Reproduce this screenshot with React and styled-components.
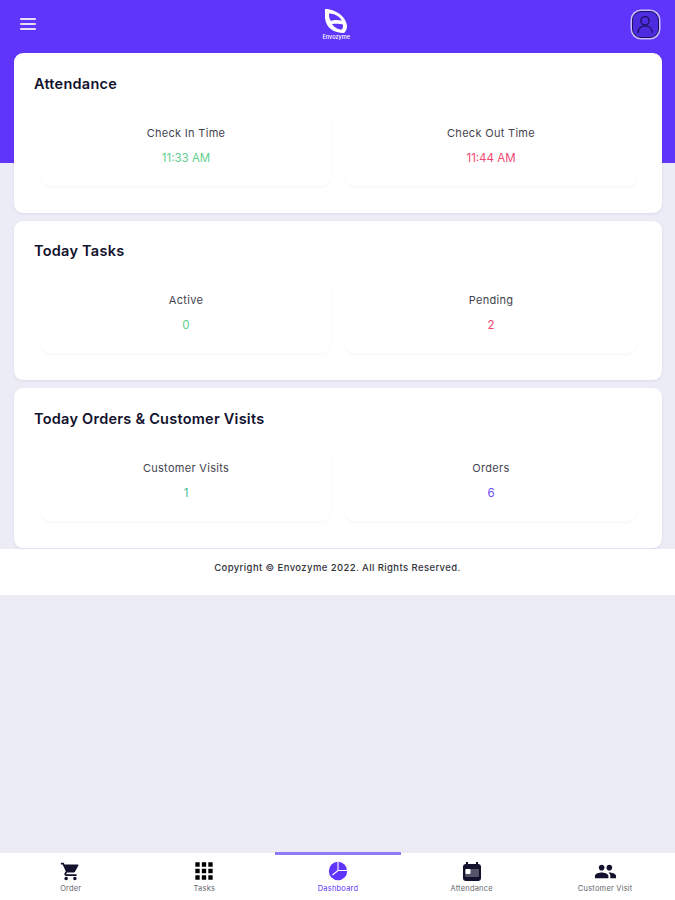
import React from "react";
import styled, { createGlobalStyle } from "styled-components";
import { MdShoppingCart, MdApps, MdPeople } from "react-icons/md";

const PURPLE = "#5f35fb";
const INK = "#12122e";

const cards = [
  {
    title: "Attendance",
    stats: [
      { label: "Check In Time", value: "11:33 AM", color: "#5fcf8c" },
      { label: "Check Out Time", value: "11:44 AM", color: "#f0476f" },
    ],
  },
  {
    title: "Today Tasks",
    stats: [
      { label: "Active", value: "0", color: "#5fcf8c" },
      { label: "Pending", value: "2", color: "#f0476f" },
    ],
  },
  {
    title: "Today Orders & Customer Visits",
    stats: [
      { label: "Customer Visits", value: "1", color: "#3fbf95" },
      { label: "Orders", value: "6", color: "#6a4cf5" },
    ],
  },
];

const Logo = () => (
  <svg width="24" height="25" viewBox="0 0 24 25">
    <path
      d="M1 0 C11 0 22 7 23 17 C23 20 22 22 20 24 C10 24 2 19 1 9 C1 6 1 3 1 0 Z"
      fill="#fff"
    />
    <path d="M5 4.5 C11 4.5 16 8 18 11.5 C15 11 10 10.5 7 12 C5 10 5 7 5 4.5 Z" fill={PURPLE} />
    <path d="M8 15 C12 14.5 16 14.5 19 15.5 C19 17 19 19 18 20.5 C14 20.5 10 18.5 8 15 Z" fill={PURPLE} />
  </svg>
);

const ProfileIcon = () => (
  <svg width="18" height="19" viewBox="0 0 19 20" fill="none" stroke="#1a1260" strokeWidth="1.4">
    <circle cx="9.5" cy="6" r="4.4" />
    <path d="M2 19 C2 14 5.5 11.5 9.5 11.5 C13.5 11.5 17 14 17 19" />
  </svg>
);

const PieIcon = () => (
  <svg width="20" height="20" viewBox="0 0 20 20">
    <circle cx="10" cy="10" r="9.2" fill={PURPLE} />
    <path d="M10 1 L10 9.5 L19 9.5 M10 9.5 L4.5 14" stroke="#fff" strokeWidth="1.1" fill="none" />
  </svg>
);

const CalendarIcon = () => (
  <svg width="20" height="19" viewBox="0 0 20 19">
    <rect x="1" y="2" width="18" height="17" rx="3" fill={INK} />
    <rect x="4" y="0" width="2" height="3" fill={INK} />
    <rect x="14" y="0" width="2" height="3" fill={INK} />
    <rect x="3" y="7" width="14" height="8" rx="1" fill="#55556a" />
    <rect x="3.5" y="7" width="5" height="5" rx="1" fill="#fff" />
  </svg>
);

const navItems = [
  { label: "Order", icon: <MdShoppingCart size={21} color={INK} /> },
  { label: "Tasks", icon: <MdApps size={26} color="#000" /> },
  { label: "Dashboard", icon: <PieIcon />, active: true },
  { label: "Attendance", icon: <CalendarIcon /> },
  { label: "Customer Visit", icon: <MdPeople size={23} color={INK} /> },
];

const App = () => (
  <>
    <GlobalStyle />
    <Page>
      <Header>
        <MenuButton>
          <span />
          <span />
          <span />
        </MenuButton>
        <Brand>
          <Logo />
          <BrandName>Envozyme</BrandName>
        </Brand>
        <Avatar>
          <ProfileIcon />
        </Avatar>
      </Header>

      <Cards>
        {cards.map((card) => (
          <Card key={card.title}>
            <CardTitle>{card.title}</CardTitle>
            <Stats>
              {card.stats.map((stat) => (
                <Stat key={stat.label}>
                  <StatLabel>{stat.label}</StatLabel>
                  <StatValue $color={stat.color}>{stat.value}</StatValue>
                </Stat>
              ))}
            </Stats>
          </Card>
        ))}
      </Cards>

      <Footer>Copyright © Envozyme 2022. All Rights Reserved.</Footer>

      <BottomNav>
        {navItems.map((item) => (
          <NavItem key={item.label}>
            <NavMark $active={item.active} />
            <NavIcon>{item.icon}</NavIcon>
            <NavLabel $active={item.active}>{item.label}</NavLabel>
          </NavItem>
        ))}
      </BottomNav>
    </Page>
  </>
);

const GlobalStyle = createGlobalStyle`
  * {
    box-sizing: border-box;
  }

  body {
    margin: 0;
    font-family: Inter, "Liberation Sans", sans-serif;
    background: #ebecf6;
  }
`;

const Page = styled.div`
  display: flex;
  flex-direction: column;
  height: 900px;
  overflow: hidden;
  background: linear-gradient(${PURPLE} 163px, #ebecf6 163px);
`;

const Header = styled.header`
  display: flex;
  align-items: center;
  justify-content: space-between;
  height: 53px;
  padding: 0 16.5px 5px 20px;
`;

const MenuButton = styled.div`
  display: flex;
  flex-direction: column;
  gap: 3px;
  width: 16px;

  span {
    height: 2px;
    border-radius: 1px;
    background: #e4ddff;
  }
`;

const Brand = styled.div`
  display: flex;
  flex-direction: column;
  align-items: center;
  margin-left: 5px;
  color: #fff;
`;

const BrandName = styled.span`
  font-size: 5.6px;
  font-weight: 500;
  line-height: 6px;
`;

const Avatar = styled.div`
  display: flex;
  align-items: center;
  justify-content: center;
  width: 27px;
  height: 27px;
  border: 1.5px solid #1a1260;
  border-radius: 9px;
  background: #4d2ce0;
  box-shadow: 0 0 0 1.5px #c9bcff;
`;

const Cards = styled.main`
  display: flex;
  flex-direction: column;
  gap: 8px;
  padding: 0 13px 0 14px;
`;

const Card = styled.section`
  height: 159.5px;
  padding: 21.5px 20px 0;
  border-radius: 9px;
  background: #fff;
  box-shadow: 0 1px 3px rgba(40, 40, 90, 0.08);
`;

const CardTitle = styled.h2`
  margin: 0;
  font-size: 14.5px;
  font-weight: 600;
  line-height: 18px;
  letter-spacing: 0.25px;
  color: ${INK};
`;

const Stats = styled.div`
  display: grid;
  grid-template-columns: 290px 292px;
  gap: 14px;
  margin: 12px 0 0 7px;
`;

const Stat = styled.div`
  display: flex;
  flex-direction: column;
  align-items: center;
  gap: 11px;
  height: 81px;
  padding-top: 21px;
  border-radius: 10px;
  box-shadow: 0 2px 3px rgba(40, 40, 90, 0.03);
`;

const StatLabel = styled.span`
  font-size: 11px;
  line-height: 14px;
  letter-spacing: 0.3px;
  color: #44444f;
`;

const StatValue = styled.span`
  font-size: 11.5px;
  line-height: 14px;
  color: ${(p) => p.$color};
`;

const Footer = styled.footer`
  display: flex;
  align-items: center;
  justify-content: center;
  height: 46px;
  margin-top: 1px;
  padding-bottom: 8px;
  background: #fff;
  font-size: 9.5px;
  font-weight: 500;
  letter-spacing: 0.4px;
  color: #33333c;
`;

const BottomNav = styled.nav`
  display: grid;
  grid-template-columns: repeat(5, 1fr);
  height: 47px;
  margin-top: auto;
  padding: 0 3px 0 4px;
  background: #fff;
`;

const NavItem = styled.div`
  display: flex;
  flex-direction: column;
  align-items: center;
`;

const NavMark = styled.div`
  flex: none;
  width: 126px;
  height: 2.5px;
  margin-top: -1px;
  background: ${(p) => (p.$active ? "#8f7af6" : "transparent")};
`;

const NavIcon = styled.div`
  display: flex;
  align-items: center;
  justify-content: center;
  height: 24px;
  margin-top: 4.5px;
`;

const NavLabel = styled.span`
  margin-top: 1px;
  font-size: 7.5px;
  line-height: 10px;
  letter-spacing: 0.2px;
  color: ${(p) => (p.$active ? PURPLE : "#66666e")};
`;

export default App;
